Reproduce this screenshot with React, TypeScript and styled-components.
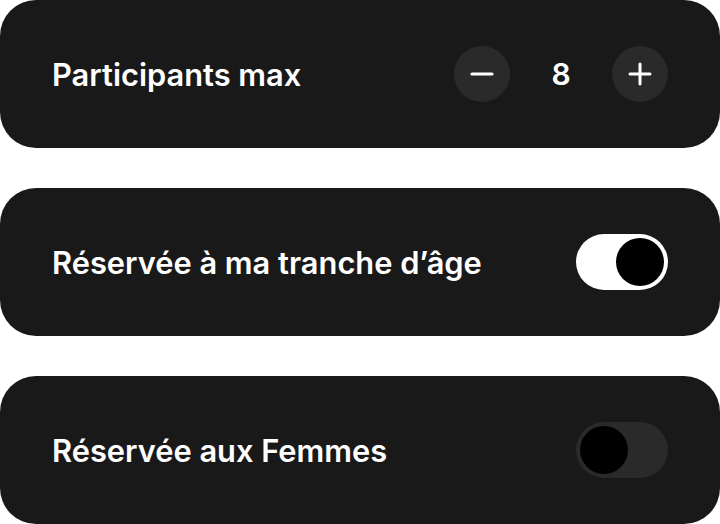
import { FC, useState } from 'react'
import styled, { createGlobalStyle } from 'styled-components'

const GlobalStyle = createGlobalStyle`
  body {
    margin: 0;
    background: #ffffff;
    font-family: Inter, 'Noto Sans', sans-serif;
  }
`

const Page = styled.div`
  display: flex;
  flex-direction: column;
  gap: 40px;
  width: 720px;
`

const Card = styled.div`
  display: flex;
  align-items: center;
  justify-content: space-between;
  height: 148px;
  padding: 0 52px;
  box-sizing: border-box;
  border-radius: 36px;
  background: #191919;
`

const Label = styled.span`
  color: #ffffff;
  font-size: 30.8px;
  font-weight: 600;
`

const Stepper = styled.div`
  display: flex;
  align-items: center;
`

const RoundButton = styled.button`
  display: flex;
  align-items: center;
  justify-content: center;
  width: 56px;
  height: 56px;
  padding: 0;
  border: none;
  border-radius: 50%;
  background: #2a2a2a;
  cursor: pointer;
`

const Count = styled.span`
  width: 102px;
  text-align: center;
  color: #ffffff;
  font-size: 30px;
  font-weight: 600;
`

const Track = styled.button<{ $on: boolean }>`
  display: flex;
  align-items: center;
  justify-content: ${p => (p.$on ? 'flex-end' : 'flex-start')};
  width: 92px;
  height: 56px;
  padding: 0 4px;
  box-sizing: border-box;
  border: none;
  border-radius: 28px;
  background: ${p => (p.$on ? '#ffffff' : '#2a2a2a')};
  cursor: pointer;
`

const Knob = styled.span`
  width: 48px;
  height: 48px;
  border-radius: 50%;
  background: #000000;
`

const MinusIcon = () => (
  <svg width="24" height="24" viewBox="0 0 24 24">
    <path d="M2 12h20" stroke="#fff" strokeWidth="3.2" strokeLinecap="round" />
  </svg>
)

const PlusIcon = () => (
  <svg width="24" height="24" viewBox="0 0 24 24">
    <path d="M2 12h20M12 2v20" stroke="#fff" strokeWidth="3" strokeLinecap="round" />
  </svg>
)

const Toggle: FC<{ initial: boolean }> = ({ initial }) => {
  const [on, setOn] = useState(initial)
  return (
    <Track $on={on} onClick={() => setOn(!on)}>
      <Knob />
    </Track>
  )
}

const App: FC = () => {
  const [count, setCount] = useState(8)

  return (
    <>
      <GlobalStyle />
      <Page>
        <Card>
          <Label>Participants max</Label>
          <Stepper>
            <RoundButton onClick={() => setCount(Math.max(1, count - 1))}>
              <MinusIcon />
            </RoundButton>
            <Count>{count}</Count>
            <RoundButton onClick={() => setCount(count + 1)}>
              <PlusIcon />
            </RoundButton>
          </Stepper>
        </Card>
        <Card>
          <Label>Réservée à ma tranche d’âge</Label>
          <Toggle initial={true} />
        </Card>
        <Card>
          <Label>Réservée aux Femmes</Label>
          <Toggle initial={false} />
        </Card>
      </Page>
    </>
  )
}

export default App
